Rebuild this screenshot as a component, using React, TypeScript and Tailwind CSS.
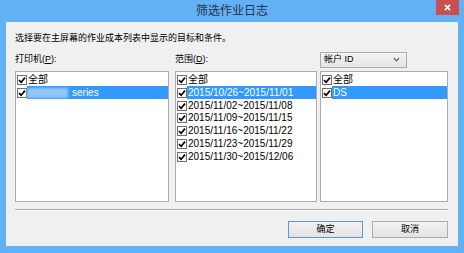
const printers = [
    { label: '全部', selected: false },
    { label: 'series', selected: true, blurred: true },
]

const ranges = [
    '全部',
    '2015/10/26~2015/11/01',
    '2015/11/02~2015/11/08',
    '2015/11/09~2015/11/15',
    '2015/11/16~2015/11/22',
    '2015/11/23~2015/11/29',
    '2015/11/30~2015/12/06',
]

const accounts = ['全部', 'DS']

function Check() {
    return (
        <span className="w-[10px] h-[10px] border border-[#707070] bg-white flex items-center justify-center shrink-0">
            <svg viewBox="0 0 8 8" className="w-[8px] h-[8px]">
                <path d="M1 4.2 L3.1 6.3 L7 1.6" fill="none" stroke="#000" strokeWidth="1.7" />
            </svg>
        </span>
    )
}

function Row({ label, selected, blurred }: { label: string; selected?: boolean; blurred?: boolean }) {
    return (
        <div className="flex items-center h-[12.8px] pl-[1px]">
            <Check />
            <div className={selected ? 'flex-1 h-full flex items-center bg-[#3399ff] text-white' : 'flex-1 h-full flex items-center text-black'}>
                {blurred && <span className="w-[41px] h-[10px] bg-[#92c6f5] mr-[3px] blur-[1px]" />}
                <span className="pl-[1px]">{label}</span>
            </div>
        </div>
    )
}

function ListBox({ width, children }: { width: string; children: React.ReactNode }) {
    return (
        <div className={`${width} h-full border border-[#acacac] bg-white pt-[1.6px] overflow-hidden`}>
            {children}
        </div>
    )
}

export default function App() {
    return (
        <div className="w-[464px] h-[253px] bg-[#62b0f5] flex flex-col font-['Liberation_Sans','Noto_Sans_CJK_SC',sans-serif]">
            <div className="relative h-[22px] flex items-center justify-center">
                <span className="text-[12px] text-[#25344a] leading-none">筛选作业日志</span>
                <div className="absolute right-[5px] top-0 w-[23px] h-[15px] bg-[#c75050] flex items-center justify-center">
                    <svg viewBox="0 0 8 8" className="w-[7px] h-[7px]">
                        <path d="M1 1 L7 7 M7 1 L1 7" stroke="#fff" strokeWidth="1.8" />
                    </svg>
                </div>
            </div>

            <div className="mx-[6px] h-[224px] bg-[#f0f0f0] flex flex-col pl-[9px] pr-[10px] text-black">
                <div className="mt-[10px] h-[12px] leading-[12px] text-[9px]">选择要在主屏幕的作业成本列表中显示的目标和条件。</div>

                <div className="mt-[7.7px] h-[16px] flex items-center text-[9px]">
                    <div className="w-[160px]">打印机(<span className="underline">P</span>):</div>
                    <div className="w-[145px]">范围(<span className="underline">D</span>):</div>
                    <div className="w-[87px] h-full border border-[#acacac] bg-gradient-to-b from-[#f3f3f3] to-[#e5e5e5] flex items-center justify-between px-[3px]">
                        <span>帐户 ID</span>
                        <svg viewBox="0 0 8 5" className="w-[7px] h-[5px] mr-[3px]">
                            <path d="M1 1 L4 4 L7 1" fill="none" stroke="#404040" strokeWidth="1.2" />
                        </svg>
                    </div>
                </div>

                <div className="mt-[3.3px] h-[131px] flex text-[10px] leading-none">
                    <ListBox width="w-[154px]">
                        {printers.map(p => <Row key={p.label} label={p.label} selected={p.selected} blurred={p.blurred} />)}
                    </ListBox>
                    <div className="w-[6px]" />
                    <ListBox width="w-[142px]">
                        {ranges.map((r, i) => <Row key={r} label={r} selected={i === 1} />)}
                    </ListBox>
                    <div className="w-[3px]" />
                    <ListBox width="w-[128px]">
                        {accounts.map((a, i) => <Row key={a} label={a} selected={i === 1} />)}
                    </ListBox>
                </div>

                <div className="mt-[7px] border-t border-[#a8a8a8] border-b border-b-white" />

                <div className="mt-[10px] flex justify-end gap-[9px] text-[9px]">
                    <button className="w-[75px] h-[17px] border border-[#5a9ad8] bg-gradient-to-b from-[#f2f2f2] to-[#e3e3e3] flex items-center justify-center">确定</button>
                    <button className="w-[76px] h-[17px] border border-[#acacac] bg-gradient-to-b from-[#f2f2f2] to-[#e3e3e3] flex items-center justify-center">取消</button>
                </div>
            </div>
        </div>
    )
}
